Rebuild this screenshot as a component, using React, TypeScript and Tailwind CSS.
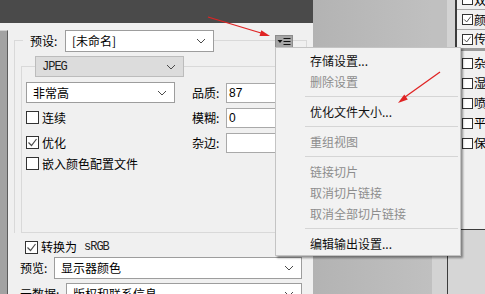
import React from 'react';

const Chevron = () => (
  <svg width="10" height="6" viewBox="0 0 10 6" className="shrink-0">
    <path d="M1 1l4 4 4-4" fill="none" stroke="#4a4a4a" strokeWidth="1" />
  </svg>
);

const Check = () => (
  <svg width="11" height="11" viewBox="0 0 11 11">
    <path d="M1.5 5.5l3 3 5-6.5" fill="none" stroke="#4d4d4d" strokeWidth="1.2" />
  </svg>
);

const Box = ({ checked, size = 13 }: { checked?: boolean; size?: number }) => (
  <span
    className="flex shrink-0 items-center justify-center border border-[#333] bg-white"
    style={{ width: size, height: size }}
  >
    {checked && <Check />}
  </span>
);

const mono = "font-['Liberation_Mono',monospace] text-[12px] tracking-[-1px] text-[#222]";

const Select = ({ value, w, h, gray, isMono }: { value: string; w: string; h: string; gray?: boolean; isMono?: boolean }) => (
  <div
    className={`${w} ${h} flex shrink-0 items-center justify-between border pl-[6px] pr-[7px] ${
      gray ? 'border-[#bcbcbc] bg-[#dcdcdc]' : 'border-[#9d9d9d] bg-white'
    }`}
  >
    <span className={isMono ? mono : ''}>{value}</span>
    <Chevron />
  </div>
);

const Field = ({ label, value }: { label: string; value: string }) => (
  <>
    <span className="ml-[17px] w-[34px] shrink-0">{label}</span>
    <div className="flex h-[20px] w-[70px] items-center border border-[#a9a9a9] bg-white pl-[2px] font-['Liberation_Sans',sans-serif] text-[12px]">
      {value}
    </div>
  </>
);

const menu: (string | null | [string])[] = [
  '存储设置...',
  ['删除设置'],
  null,
  '优化文件大小...',
  null,
  ['重组视图'],
  null,
  ['链接切片'],
  ['取消切片链接'],
  ['取消全部切片链接'],
  null,
  '编辑输出设置...',
];

const brushTop = [
  { t: '双重画笔', c: false },
  { t: '颜色动态', c: true },
  { t: '传递', c: true },
];
const brushBottom = ['杂色', '湿边', '喷枪', '平滑', '保护纹理'];

export default function App() {
  return (
    <div className="relative flex h-[294px] w-[485px] overflow-hidden font-['Noto_Sans_CJK_SC',sans-serif] text-[12px] leading-none text-black">
      {/* dialog */}
      <div className="flex w-[313px] shrink-0 flex-col overflow-hidden">
        <div className="h-[23px] shrink-0 bg-[#4a4a4a]" />
        <div className="flex min-h-0 flex-1">
          <div className="flex w-[8px] flex-col">
            <div className="h-[7px] shrink-0 bg-[#f0f0f0]" />
            <div className="flex-1 border-r border-t border-r-[#5c5c5c] border-t-[#cfcfcf] bg-[#a2a2a2]" />
          </div>
          <div className="flex w-[305px] flex-col bg-[#f0f0f0]">
            <div className="ml-[6px] mt-[17px] flex w-[293px] shrink-0 flex-col border border-b-0 border-[#d9d9d9]">
              <div className="-mt-[11px] flex h-[22px] items-center">
                <span className="w-[8px]" />
                <span className="flex h-full w-[42px] items-center bg-[#f0f0f0] pl-[7px]">预设:</span>
                <Select value="[未命名]" w="w-[149px]" h="h-[22px]" />
                <span className="flex-1" />
                <span className="flex h-[13px] w-[18px] items-center justify-center gap-[1px] border border-[#8c8c8c] bg-[#a6a6a6]">
                  <svg width="14" height="9" viewBox="0 0 14 9">
                    <path d="M0.5 3h5l-2.5 3z" fill="#111" />
                    <path d="M6.5 1.5h7M6.5 4.5h7M6.5 7.5h7" stroke="#111" strokeWidth="1.2" />
                  </svg>
                </span>
                <span className="w-[13px]" />
              </div>
              <div className="mx-[6px] mt-[14px] flex h-[167px] flex-col border border-[#d9d9d9]">
                <div className="-mt-[11px] ml-[13px]">
                  <Select value="JPEG" w="w-[149px]" h="h-[21px]" gray isMono />
                </div>
                <div className="mt-[5px] flex flex-col pl-[4px]">
                  <div className="flex h-[21px] items-center">
                    <Select value="非常高" w="w-[149px]" h="h-[21px]" />
                    <Field label="品质:" value="87" />
                  </div>
                  <div className="mt-[4px] flex h-[21px] items-center">
                    <label className="flex w-[149px] items-center gap-[3px]">
                      <Box />连续
                    </label>
                    <Field label="模糊:" value="0" />
                  </div>
                  <div className="mt-[4px] flex h-[21px] items-center">
                    <label className="flex w-[149px] items-center gap-[3px]">
                      <Box checked />优化
                    </label>
                    <Field label="杂边:" value="" />
                  </div>
                  <div className="flex h-[21px] items-center">
                    <label className="flex items-center gap-[3px]">
                      <Box />嵌入颜色配置文件
                    </label>
                  </div>
                </div>
              </div>
            </div>
            <div className="mt-[4px] flex h-[20px] shrink-0 items-center gap-[3px] pl-[17px]">
              <Box checked />
              <span>转换为</span>
              <span className={`ml-[4px] ${mono}`}>sRGB</span>
            </div>
            <div className="flex h-[22px] shrink-0 items-center pl-[12px]">
              <span className="w-[34px] shrink-0">预览:</span>
              <Select value="显示器颜色" w="w-[248px]" h="h-[22px]" />
            </div>
            <div className="mt-[4px] flex h-[22px] shrink-0 items-center pl-[12px]">
              <span className="w-[46px] shrink-0">元数据:</span>
              <Select value="版权和联系信息" w="w-[236px]" h="h-[22px]" />
            </div>
          </div>
        </div>
      </div>

      {/* workspace to the right */}
      <div className="w-[119px] shrink-0 bg-gradient-to-r from-[#b3b3b3] to-[#c0c0c0]" />
      <div className="flex w-[53px] shrink-0 flex-col">
        <div className="flex h-[229px] shrink-0">
          <div className="w-[15px] bg-[#c0c0c0]" />
          <div className="w-[8px] bg-[#d3d3d3]" />
          <div className="w-[2px] bg-[#3c3c3c]" />
          <div className="flex flex-1 flex-col overflow-hidden bg-[#f0f0f0]">
            <div className="-mt-[10px] flex flex-col">
              {brushTop.map((b, i) => (
                <div
                  key={b.t}
                  className={`flex items-center gap-[1px] whitespace-nowrap pl-[5px] ${
                    i < 2 ? 'h-[20px] border-b border-[#a9a9a9]' : 'h-[18px]'
                  }`}
                >
                  <Box checked={b.c} size={11} />
                  <span>{b.t}</span>
                </div>
              ))}
            </div>
            <div className="h-[3px] shrink-0 bg-[#9a9a9a]" />
            <div className="mt-[2px] flex flex-col">
              {brushBottom.map((t) => (
                <div key={t} className="flex h-[20px] items-center gap-[1px] whitespace-nowrap pl-[5px]">
                  <Box size={11} />
                  <span>{t}</span>
                </div>
              ))}
            </div>
          </div>
        </div>
        <div className="flex flex-1">
          <div className="w-[15px] bg-[#d3d3d3]" />
          <div className="flex-1 border-l border-t border-[#3c3c3c] bg-[#d6d6d6]" />
        </div>
      </div>

      {/* flyout menu */}
      <div className="absolute left-[275px] top-[47px] flex h-[209px] w-[186px] flex-col border border-[#c4c4c4] bg-[#f2f2f2] pb-[1px] pt-[2px] shadow-[2px_2px_2px_rgba(0,0,0,0.4)]">
        {menu.map((m, i) =>
          m === null ? (
            <div key={i} className="flex h-[9px] items-center pl-[29px] pr-[2px]">
              <div className="h-px flex-1 bg-[#d5d5d5]" />
            </div>
          ) : (
            <div
              key={i}
              className={`flex h-[21px] items-center pl-[34px] ${Array.isArray(m) ? 'text-[#8d8d8d]' : 'text-[#111]'}`}
            >
              {Array.isArray(m) ? m[0] : m}
            </div>
          )
        )}
      </div>

      {/* annotation arrows */}
      <svg className="pointer-events-none absolute left-0 top-0" width="485" height="294" viewBox="0 0 485 294">
        <path d="M208 17L261 33" stroke="#e02424" strokeWidth="1.3" />
        <path d="M270 36L261.3 30.2L259.5 36Z" fill="#e02424" />
        <path d="M440 72L405 97" stroke="#e02424" strokeWidth="1.3" />
        <path d="M398 103L404.3 94.6L407.8 99.5Z" fill="#e02424" />
      </svg>
    </div>
  );
}
